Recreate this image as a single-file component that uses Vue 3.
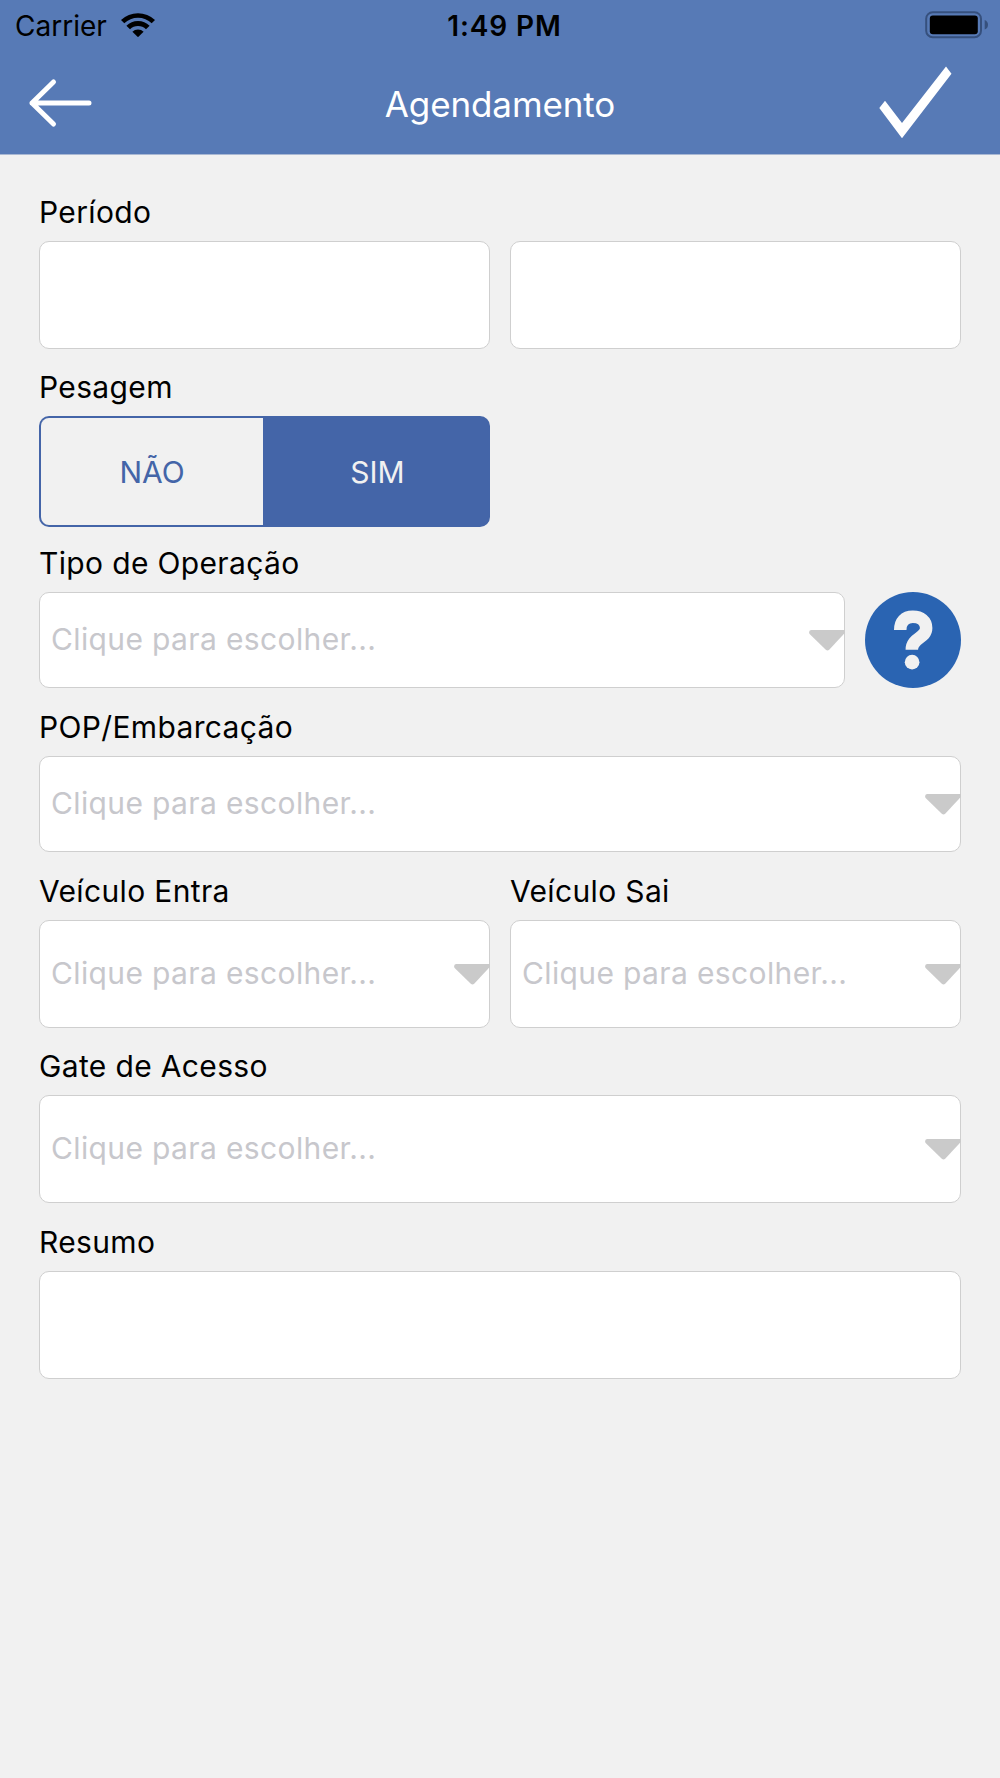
<script setup>
import { ref } from "vue";

const weighing = ref("SIM");
const options = ["NÃO", "SIM"];

const rows = [
  { name: "period", fields: [{ label: "Período" }, { label: "" }] },
  { name: "weighing", toggle: true, fields: [{ label: "Pesagem" }] },
  {
    name: "operation",
    help: true,
    short: true,
    fields: [{ label: "Tipo de Operação", select: true }],
  },
  {
    name: "vessel",
    short: true,
    fields: [{ label: "POP/Embarcação", select: true }],
  },
  {
    name: "vehicle",
    fields: [
      { label: "Veículo Entra", select: true },
      { label: "Veículo Sai", select: true },
    ],
  },
  { name: "gate", fields: [{ label: "Gate de Acesso", select: true }] },
  { name: "summary", fields: [{ label: "Resumo" }] },
];
</script>

<template>
  <div class="screen">
    <header class="header">
      <div class="status-bar">
        <div class="status-left">
          <span class="carrier">Carrier</span>
          <svg class="wifi" width="34" height="24" viewBox="0 0 34 24">
            <path
              d="M0 7 A24.5 24.5 0 0 1 34 7 L30.7 10.3 A19.5 19.5 0 0 0 3.3 10.3 Z"
            />
            <path
              d="M5.4 12.7 A16.6 16.6 0 0 1 28.6 12.7 L25 16.3 A11.5 11.5 0 0 0 9 16.3 Z"
            />
            <path d="M11.4 18.7 A8 8 0 0 1 22.6 18.7 L17 24.2 Z" />
          </svg>
        </div>
        <span class="time">1:49 PM</span>
        <div class="status-right">
          <svg class="battery" width="64" height="28" viewBox="0 0 64 28">
            <rect
              class="battery-outline"
              x="1.2"
              y="1.2"
              width="54.8"
              height="25"
              rx="6.5"
            />
            <rect x="4.8" y="4.4" width="48" height="18.8" rx="3" />
            <path class="battery-tip" d="M59.7 9 Q63 10.5 63 13.7 Q63 17 59.7 18.6 Z" />
          </svg>
        </div>
      </div>
      <nav class="nav-bar">
        <svg class="back" width="66" height="50" viewBox="0 0 66 50">
          <path d="M62 25 H5 M26.5 4 L5 25 L26.5 46" />
        </svg>
        <h1 class="title">Agendamento</h1>
        <svg class="confirm" width="74" height="74" viewBox="0 0 74 74">
          <path d="M1.3 42 L7 34.7 L24 57 L68 0.5 L73.5 7.8 L24 72.2 Z" />
        </svg>
      </nav>
    </header>

    <main class="form">
      <section v-for="row in rows" :key="row.name" class="row">
        <div
          v-for="(field, i) in row.fields"
          :key="i"
          :class="['field', { half: row.toggle }]"
        >
          <label class="label">{{ field.label }}</label>
          <div v-if="row.toggle" class="toggle">
            <button
              v-for="option in options"
              :key="option"
              type="button"
              :class="['toggle-item', { active: weighing === option }]"
              @click="weighing = option"
            >
              {{ option }}
            </button>
          </div>
          <div v-else :class="['box', { short: row.short }]">
            <template v-if="field.select">
              <span class="placeholder">Clique para escolher...</span>
              <svg class="caret" width="36" height="21" viewBox="0 0 36 21">
                <path
                  d="M2 0 H36 V2.8 L20.2 19.8 Q18.5 21.4 16.8 19.8 L0.6 4 Q-0.9 1 2 0 Z"
                />
              </svg>
            </template>
          </div>
        </div>
        <button v-if="row.help" type="button" class="help">
          <svg width="96" height="96" viewBox="0 0 97 97">
            <circle class="help-bg" cx="48.5" cy="48.5" r="48.5" />
            <path
              class="help-hook"
              d="M35.6 38.3 C35.6 29.8 40 25 48.3 25 C56.5 25 61.8 29.3 61.8 36.5 C61.8 47 47.3 46 47.3 58.3"
            />
            <circle class="help-dot" cx="47.6" cy="70.9" r="7.4" />
          </svg>
        </button>
      </section>
    </main>
  </div>
</template>

<style>
body {
  margin: 0;
  background-color: #f1f1f1;
}
</style>

<style scoped>
.screen {
  width: 1000px;
  min-height: 1778px;
  background-color: #f1f1f1;
  font-family: Inter, "Liberation Sans", sans-serif;
  color: #000000;
}

button {
  padding: 0;
  border: none;
  background: none;
  font-family: inherit;
}

svg {
  display: block;
  flex-shrink: 0;
}

/* HEADER */
.header {
  box-sizing: border-box;
  height: 155px;
  background-color: #577ab6;
  border-bottom: 1px solid #a9b8d3;
}

.status-bar {
  display: grid;
  grid-template-columns: 1fr auto 1fr;
  align-items: center;
  height: 50px;
  padding: 0 11px 0 15px;
}

.status-left {
  display: flex;
  align-items: center;
  gap: 14px;
}

.carrier {
  padding-top: 2px;
  font-size: 28px;
}

.wifi {
  margin-bottom: 1px;
}

.time {
  padding: 2px 0 0 5px;
  font-size: 28px;
  font-weight: 600;
  letter-spacing: 0.9px;
}

.status-right {
  display: flex;
  justify-content: flex-end;
}

.battery {
  margin-bottom: 1px;
}

.battery-outline {
  fill: none;
  stroke: #36507d;
  stroke-width: 2;
}

.battery-tip {
  fill: #36507d;
}

.nav-bar {
  display: grid;
  grid-template-columns: 1fr auto 1fr;
  align-items: center;
  height: 104px;
  padding: 1px 27px 0;
}

.back path {
  fill: none;
  stroke: #ffffff;
  stroke-width: 5;
  stroke-linecap: round;
  stroke-linejoin: round;
}

.title {
  margin: 0;
  padding-top: 1px;
  font-size: 35px;
  font-weight: 400;
  letter-spacing: -0.1px;
  color: #ffffff;
}

.confirm {
  justify-self: end;
  margin-right: 21px;
  fill: #ffffff;
}

/* FORM */
.form {
  display: grid;
  grid-template-rows: 175px 176px 164px 164px 175px 176px 155px;
  padding: 39px 39px 0;
}

.row {
  display: flex;
  gap: 20px;
}

.field {
  flex: 1;
}

.field.half {
  flex: 0 0 451px;
}

.label {
  display: block;
  height: 47px;
  line-height: 37px;
  font-size: 30px;
  letter-spacing: 0.35px;
}

.box {
  box-sizing: border-box;
  display: flex;
  align-items: center;
  justify-content: space-between;
  height: 108px;
  padding-left: 11px;
  border: 1px solid #cfcfcf;
  border-radius: 10px;
  background-color: #ffffff;
}

.box.short {
  height: 96px;
}

.placeholder {
  padding-bottom: 2px;
  font-size: 30px;
  letter-spacing: 0.37px;
  color: #c7c7cc;
}

.caret {
  margin-right: -1px;
  fill: #cacaca;
}

/* TOGGLE */
.toggle {
  display: flex;
  height: 111px;
}

.toggle-item {
  box-sizing: border-box;
  width: 224px;
  border: 2px solid #4465a8;
  font-size: 30px;
  color: #4465a8;
}

.toggle-item:first-child {
  border-right: none;
  border-radius: 10px 0 0 10px;
}

.toggle-item:last-child {
  width: 227px;
  padding-left: 2px;
  border-radius: 0 10px 10px 0;
}

.toggle-item.active {
  background-color: #4465a8;
  color: #f1f1f1;
}

/* HELP */
.help {
  align-self: flex-start;
  margin-top: 47px;
}

.help-bg {
  fill: #2a64b2;
}

.help-hook {
  fill: none;
  stroke: #f1f1f1;
  stroke-width: 12.6;
}

.help-dot {
  fill: #f1f1f1;
}
</style>
